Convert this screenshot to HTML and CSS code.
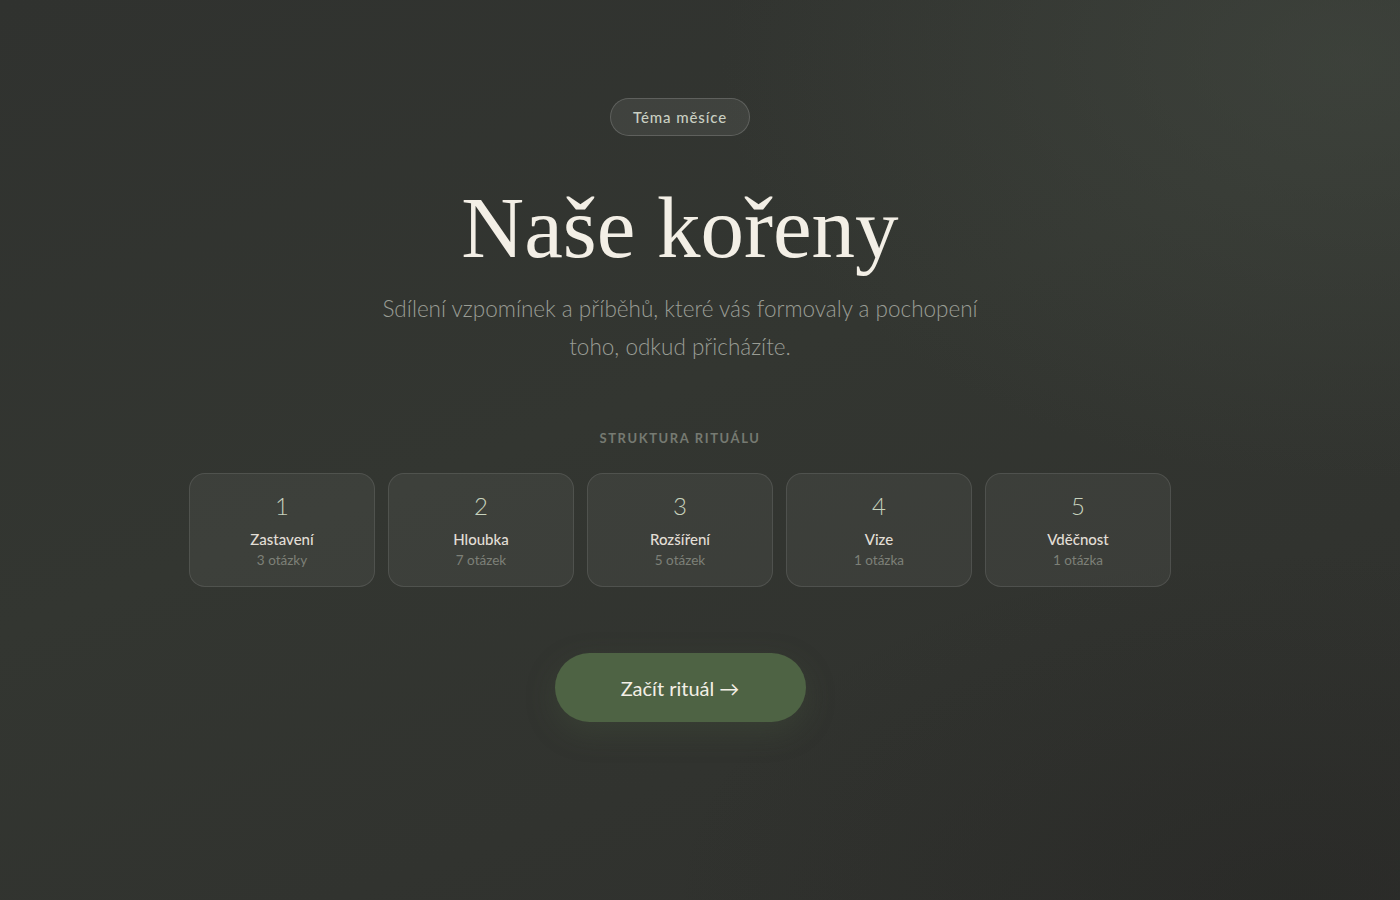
FILE: index.html
```html
<!DOCTYPE html>
<html lang="cs">
<head>
<meta charset="utf-8">
<title>Naše kořeny</title>
<link rel="stylesheet" href="styles.css">
</head>
<body>
<main class="page">
  <section class="hero">
    <span class="pill">Téma měsíce</span>
    <h1 class="title">Naše kořeny</h1>
    <p class="lead">Sdílení vzpomínek a příběhů, které vás formovaly a pochopení toho, odkud přicházíte.</p>
    <div class="label">Struktura rituálu</div>
    <div class="steps">
      <div class="step"><div class="num">1</div><div class="name">Zastavení</div><div class="count">3 otázky</div></div>
      <div class="step"><div class="num">2</div><div class="name">Hloubka</div><div class="count">7 otázek</div></div>
      <div class="step"><div class="num">3</div><div class="name">Rozšíření</div><div class="count">5 otázek</div></div>
      <div class="step"><div class="num">4</div><div class="name">Vize</div><div class="count">1 otázka</div></div>
      <div class="step"><div class="num">5</div><div class="name">Vděčnost</div><div class="count">1 otázka</div></div>
    </div>
    <button class="cta">Začít rituál →</button>
  </section>
</main>
</body>
</html>
```

FILE: styles.css
```css
* { box-sizing: border-box; }
html, body { margin: 0; height: 100%; }
body {
  background:
    radial-gradient(ellipse 900px 600px at 1350px 60px, rgba(70,76,68,0.5), rgba(70,76,68,0) 70%),
    radial-gradient(ellipse 900px 500px at 1300px 900px, rgba(36,36,34,0.45), rgba(36,36,34,0) 70%),
    linear-gradient(160deg, #30322f 0%, #333631 45%, #2f302d 100%);
  color: #f3efe6;
  font-family: Lato, "Open Sans", sans-serif;
  min-height: 900px;
}
.page {
  padding-right: 40px;
}
.hero {
  display: flex;
  flex-direction: column;
  align-items: center;
  padding-top: 98px;
}
.pill {
  display: inline-flex;
  align-items: center;
  justify-content: center;
  height: 38px;
  padding: 0 22px;
  border-radius: 999px;
  border: 1px solid rgba(255,255,255,0.16);
  background: rgba(255,255,255,0.07);
  color: #c9cfc2;
  font-size: 15px;
  font-weight: 500;
  letter-spacing: 0.9px;
}
.title {
  margin: 42px 0 0;
  font-family: "Liberation Serif", "Times New Roman", serif;
  font-weight: 400;
  font-size: 87px;
  line-height: 100px;
  color: #f3efe6;
}
.lead {
  margin: 12px 0 0;
  max-width: 620px;
  text-align: center;
  font-size: 22.5px;
  font-weight: 300;
  line-height: 38px;
  color: #9a9d95;
}
.label {
  margin-top: 64px;
  font-size: 13px;
  font-weight: 700;
  letter-spacing: 1.6px;
  text-transform: uppercase;
  color: #767a72;
}
.steps {
  display: flex;
  gap: 13px;
  margin-top: 27px;
}
.step {
  width: 186px;
  height: 114px;
  border-radius: 16px;
  border: 1px solid rgba(255,255,255,0.1);
  background: rgba(255,255,255,0.05);
  display: flex;
  flex-direction: column;
  align-items: center;
  padding-top: 17px;
}
.num {
  font-size: 24px;
  font-weight: 300;
  line-height: 30px;
  color: #c7d2bd;
}
.name {
  margin-top: 8px;
  font-size: 15px;
  font-weight: 500;
  line-height: 20px;
  color: #e2ded6;
}
.count {
  margin-top: 2px;
  font-size: 13.5px;
  line-height: 18px;
  color: #7d8078;
}
.cta {
  margin-top: 66px;
  width: 251px;
  height: 69px;
  border: none;
  border-radius: 999px;
  background: #4e6344;
  color: #f3efe6;
  font-family: Lato, "Open Sans", sans-serif;
  font-size: 20px;
  font-weight: 400;
  box-shadow: 0 10px 30px rgba(78,99,68,0.25);
}
```
